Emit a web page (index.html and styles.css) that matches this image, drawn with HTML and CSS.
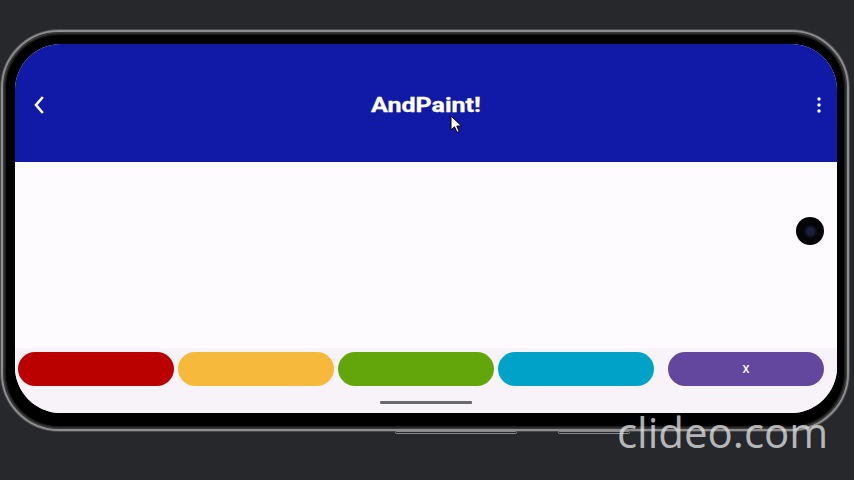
FILE: index.html
```html
<!DOCTYPE html>
<html>
<head>
<meta charset="utf-8">
<link rel="stylesheet" href="styles.css">
</head>
<body>
<div class="phone">
  <div class="screen">
    <header class="appbar">
      <div class="bar-left">
        <svg class="back" width="12" height="18" viewBox="0 0 12 18"><path d="M9 2 L3 9 L9 16" fill="none" stroke="#fff" stroke-width="2.6" stroke-linecap="square"/></svg>
      </div>
      <h1 class="title">AndPaint!</h1>
      <div class="bar-right">
        <svg class="kebab" width="4" height="16" viewBox="0 0 4 16"><circle cx="2" cy="2" r="1.7" fill="#fff"/><circle cx="2" cy="8" r="1.7" fill="#fff"/><circle cx="2" cy="14" r="1.7" fill="#fff"/></svg>
      </div>
    </header>
    <main class="canvas"></main>
    <footer class="palette">
      <div class="buttons">
        <button class="pill red"></button>
        <button class="pill yellow"></button>
        <button class="pill green"></button>
        <button class="pill cyan"></button>
        <button class="pill purple clear">X</button>
      </div>
      <div class="home"></div>
    </footer>
  </div>
  <div class="camera"><div class="lens"></div></div>
  <div class="side-btn b1"></div>
  <div class="side-btn b2"></div>
</div>
<svg class="cursor" width="14" height="20" viewBox="0 0 14 20"><path d="M1 1 L1 15 L4.5 11.8 L7 17.5 L9.2 16.5 L6.8 11 L11.5 11 Z" fill="#fff" stroke="#000" stroke-width="1"/></svg>
<div class="watermark">clideo.com</div>
</body>
</html>
```
FILE: styles.css
```css
html, body {
  margin: 0;
  padding: 0;
}
body {
  width: 854px;
  height: 480px;
  background: #27282b;
  position: relative;
  overflow: hidden;
  font-family: Roboto, "Noto Sans", sans-serif;
}
.phone {
  position: relative;
  margin: 30px 0 0 1px;
  width: 848px;
  height: 401px;
  box-sizing: border-box;
  border-radius: 58px;
  background: #000;
  border: 2px solid #8d8d8f;
  box-shadow: inset 0 0 0 1.5px #3a3a3c, inset 0 0 0 3px #1a1a1a, 0 0 0 1px #4a4a4c;
  padding: 12px 10px 16px 12px;
}
.screen {
  width: 100%;
  height: 100%;
  border-radius: 46px;
  overflow: hidden;
  display: flex;
  flex-direction: column;
  background: #fefbfe;
}
.appbar {
  height: 118px;
  flex: none;
  background: #1119a7;
  display: grid;
  grid-template-columns: 1fr auto 1fr;
  align-items: center;
  padding-top: 4px;
  box-sizing: border-box;
}
.bar-left {
  padding-left: 18px;
  display: flex;
}
.bar-right {
  display: flex;
  justify-content: flex-end;
  padding-right: 16px;
}
.back, .kebab { display: block; }
.title {
  margin: 0;
  color: #fff;
  font-family: Roboto, sans-serif;
  font-weight: 700;
  font-size: 20px;
  line-height: 24px;
  transform: scaleX(1.25);
  -webkit-text-stroke: 0.3px #fff;
}
.canvas {
  flex: 1;
  background: #fefbfe;
}
.palette {
  height: 65px;
  flex: none;
  background: #f8f2f9;
  display: flex;
  flex-direction: column;
  align-items: center;
  padding-top: 4px;
  box-sizing: border-box;
}
.buttons {
  display: flex;
  align-self: stretch;
  padding-left: 3px;
  gap: 4px;
}
.pill {
  width: 156px;
  height: 34px;
  border: none;
  border-radius: 17px;
  padding: 0;
  color: #fff;
  font-family: Roboto, sans-serif;
  font-weight: 500;
  font-size: 11px;
}
.red { background: #bb0000; }
.yellow { background: #f6b93b; }
.green { background: #62a60b; }
.cyan { background: #00a3c7; }
.purple { background: #63479e; margin-left: 10px; }
.home {
  margin-top: 15px;
  width: 92px;
  height: 3px;
  background: #6a6a6d;
  border-radius: 1px;
}
.camera {
  position: absolute;
  left: 793px;
  top: 185px;
  width: 28px;
  height: 28px;
  border-radius: 50%;
  background: #050507;
  display: flex;
  align-items: center;
  justify-content: center;
}
.lens {
  width: 9px;
  height: 9px;
  border-radius: 50%;
  background: #1a1f3a;
  box-shadow: 0 0 0 2px #0d0f1c;
}
.side-btn {
  position: absolute;
  top: 399px;
  height: 1px;
  border: 1px solid #8a8a8c;
  border-radius: 2px;
}
.b1 { left: 392px; width: 120px; }
.b2 { left: 555px; width: 70px; }
.cursor {
  position: absolute;
  left: 450px;
  top: 115px;
}
.watermark {
  position: absolute;
  left: 617px;
  top: 404px;
  font-family: "Open Sans", Lato, sans-serif;
  font-weight: 400;
  font-size: 42px;
  line-height: 56px;
  letter-spacing: 0;
  color: rgba(222, 222, 222, 0.8);
}
```
